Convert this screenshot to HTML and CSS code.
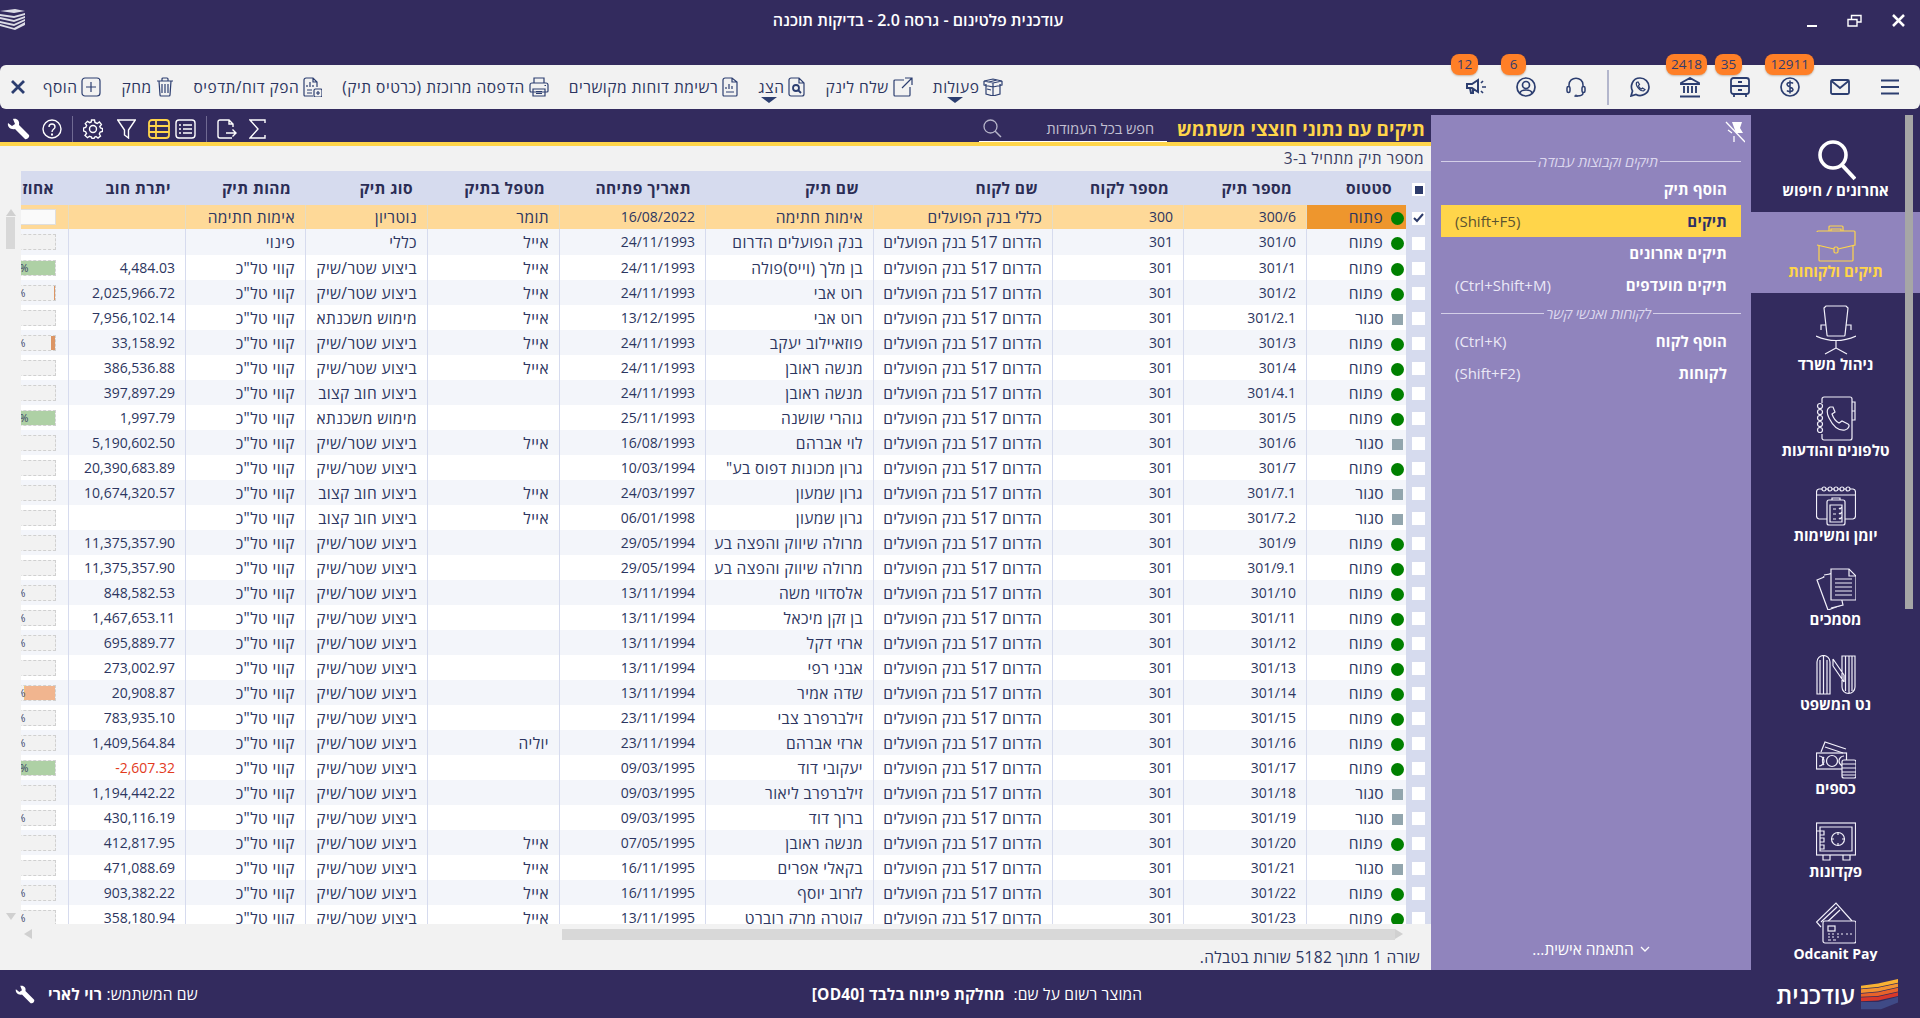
FILE: index.html
```html
<!DOCTYPE html>
<html lang="he" dir="rtl">
<head>
<meta charset="utf-8">
<title>עודכנית פלטינום</title>
<link rel="stylesheet" href="styles.css">
</head>
<body>
<div class="app">
  <header class="titlebar">
    <div class="winctl">
      <svg class="wc-close" width="13" height="13" viewBox="0 0 13 13"><path d="M1 1L12 12M12 1L1 12"/></svg>
      <svg class="wc-restore" width="15" height="13" viewBox="0 0 15 13"><path d="M1 5.500H10V12H1ZM4.500 5V1.500H14V8H10.500"/></svg>
      <svg class="wc-min" width="10" height="12" viewBox="0 0 10 12"><path d="M0 11H10"/></svg>
    </div>
    <div class="apptitle">עודכנית פלטינום - גרסה 2.0 - בדיקות תוכנה</div>
    <div class="applogo">
      <svg width="25" height="21" viewBox="0 0 25 21"><path d="M0 2L15 0L25 2L14 4ZM0 5L14 7L25 4V6L14 9L0 7ZM0 8L14 11L25 7V9L14 13L0 10ZM0 12L14 15L25 10V12L14 17L0 14ZM0 15L14 19L25 13V16L15 21L0 17Z" fill="#dcdce6"/></svg>
    </div>
  </header>

  <nav class="toolbar">
    <div class="tb-icons">
      <div class="tb-icon"><svg width="20" height="20" viewBox="0 0 20 20" class="ic"><path d="M1 3.500H19M1 10H19M1 16.500H19" stroke-width="2.200"/></svg></div>
      <div class="tb-icon"><svg width="20" height="16" viewBox="0 0 20 16" class="ic"><rect x="1" y="1" width="18" height="14" rx="1.500" stroke-width="1.800"/><path d="M1.500 2L10 9L18.500 2" stroke-width="1.800"/></svg></div>
      <div class="tb-icon"><span class="badge b5">12911</span><svg width="20" height="20" viewBox="0 0 20 20" class="ic"><circle cx="10" cy="10" r="9" stroke-width="1.700"/><path d="M13 6.500C12 5 7 5 7 7.500S13 10 13 12.500S8 15 7 13.500M10 3.500V16.500" stroke-width="1.500"/></svg></div>
      <div class="tb-icon"><span class="badge b4">35</span><svg width="20" height="20" viewBox="0 0 20 20" class="ic"><rect x="1" y="1" width="18" height="16" rx="2.500" stroke-width="1.800"/><path d="M1 9H19M8 5H12M8 13H12M4 17V20M16 17V20" stroke-width="1.800"/></svg></div>
      <div class="tb-icon"><span class="badge b3">2418</span><svg width="20" height="21" viewBox="0 0 20 21" class="ic"><path d="M1 6L10 1L19 6V7H1ZM4 9V16M8 9V16M12 9V16M16 9V16M0 19.500H20" stroke-width="1.900"/></svg></div>
      <div class="tb-icon"><svg width="20" height="20" viewBox="0 0 20 20" class="ic"><path d="M1 19L2.500 14C0 9.500 2 1 10 1C15 1 19 5 19 10C19 16.500 11.500 20.500 6 17.500Z" stroke-width="1.700"/><path d="M6.500 5.500C5.500 8 9 14 13.500 14L15 12.500L12.500 11L11.500 12C10 11.500 8.500 9.500 8.500 8.500L9.500 7.500L8 5Z" stroke-width="1.200"/></svg></div>
      <div class="tb-sep"></div>
      <div class="tb-icon"><svg width="20" height="20" viewBox="0 0 20 20" class="ic"><path d="M3 10V8C3 -1 17 -1 17 8V10M1 11C1 9 4 9 4 11V14C4 16 1 16 1 14ZM19 11C19 9 16 9 16 11V14C16 16 19 16 19 14ZM17 16C17 18 15 19 11 19" stroke-width="1.500"/><circle cx="10" cy="19" r="1" stroke-width="1.200"/></svg></div>
      <div class="tb-icon"><span class="badge b2">6</span><svg width="20" height="20" viewBox="0 0 20 20" class="ic"><circle cx="10" cy="10" r="9" stroke-width="1.700"/><circle cx="10" cy="8" r="3.500" stroke-width="1.700"/><path d="M4 16C5 12 15 12 16 16" stroke-width="1.700"/></svg></div>
      <div class="tb-icon"><span class="badge b1">12</span><svg width="20" height="18" viewBox="0 0 20 18" class="ic"><path d="M1 6H6L12 2V14L6 10H1ZM4 10L5 15H7L7 11" stroke-width="2"/><path d="M15 5L17 3M16 9H20M15 13L17 15" stroke-width="1.700"/></svg></div>
    </div>
    <div class="tb-actions">
      <button class="act has-caret"><svg width="20" height="18" viewBox="0 0 20 18" class="ic thin"><path d="M3 6V16L10 18L17 16V6M1 3L10 1L19 3L10 5ZM1 3V7L10 9L19 7V3M10 5V18M6 4L14 2M4 11L8 12"/></svg>פעולות</button>
      <button class="act"><svg width="20" height="20" viewBox="0 0 20 20" class="ic thin"><path d="M11 3H2A1 1 0 0 0 1 4V18A1 1 0 0 0 2 19H16A1 1 0 0 0 17 18V10M9 11L19 1M12 1H19V8"/></svg>שלח לינק</button>
      <button class="act has-caret"><svg width="17" height="20" viewBox="0 0 17 20" class="ic thin"><path d="M3 1H11L16 6V17A2 2 0 0 1 14 19H3A2 2 0 0 1 1 17V3A2 2 0 0 1 3 1ZM11 1V6H16"/><circle cx="8" cy="11" r="3" stroke-width="1.800"/><path d="M10 13L13 16" stroke-width="1.800"/></svg>הצג</button>
      <button class="act"><svg width="16" height="20" viewBox="0 0 16 20" class="ic thin"><path d="M3 1H10L15 5V18A1 1 0 0 1 14 19H2A1 1 0 0 1 1 18V3A2 2 0 0 1 3 1ZM10 1V5H15M4 15H12M4 12V10M7 12V7M10 12V9"/></svg>רשימת דוחות מקושרים</button>
      <button class="act"><svg width="20" height="20" viewBox="0 0 20 20" class="ic thin"><path d="M5 6V1H15V6M1 8A2 2 0 0 1 3 6H17A2 2 0 0 1 19 8V14A1 1 0 0 1 18 15H2A1 1 0 0 1 1 14ZM4 12H16V19H4ZM7 14.500H13M7 16.500H13M15.500 8.500H17"/></svg>הדפסה מרוכזת (כרטיס תיק)</button>
      <button class="act"><svg width="19" height="20" viewBox="0 0 19 20" class="ic thin"><path d="M3 1H10L14 5V10M10 1V5H14M10 19H2A1 1 0 0 1 1 18V3A2 2 0 0 1 3 1M4 10V8M7 10V5M10 10V8M4 13H9M4 16H9"/><rect x="11" y="12" width="8" height="8" rx="1.500"/><path d="M15 14V18M13 16H17"/></svg>הפק דוח/תדפיס</button>
      <button class="act"><svg width="18" height="20" viewBox="0 0 18 20" class="ic thin"><path d="M1 4H17M6 4V2A1 1 0 0 1 7 1H11A1 1 0 0 1 12 2V4M3 4L4 18A1 1 0 0 0 5 19H13A1 1 0 0 0 14 18L15 4M6 7V16M9 7V16M12 7V16"/></svg>מחק</button>
      <button class="act"><svg width="20" height="20" viewBox="0 0 20 20" class="ic thin"><rect x="1" y="1" width="18" height="18" rx="3"/><path d="M10 5V15M5 10H15"/></svg>הוסף</button>
      <svg class="ic act-x" width="14" height="14" viewBox="0 0 14 14"><path d="M1 1L13 13M13 1L1 13" stroke-width="2.800"/></svg>
    </div>
  </nav>

  <main class="main">
    <aside class="sidenav">
      <div class="navscroll"></div>
      <a class="navitem first">
        <svg width="40" height="42" viewBox="0 0 40 42" class="nv"><circle cx="17" cy="16" r="13" stroke-width="3.600"/><path d="M26 26L39 40" stroke-width="4"/></svg>
        <span>אחרונים / חיפוש</span>
      </a>
      <a class="navitem active">
        <svg width="40" height="37" viewBox="0 0 40 37" class="nv"><path d="M13 6V2A1 1 0 0 1 14 1H26A1 1 0 0 1 27 2V6M15 6V4H25V6M1 7A1 1 0 0 1 2 6H38A1 1 0 0 1 39 7V20L22 24M18 24L1 20ZM3 21V35A1 1 0 0 0 4 36H36A1 1 0 0 0 37 35V21"/><rect x="18" y="22" width="4" height="6" rx="1.500"/></svg>
        <span>תיקים ולקוחות</span>
      </a>
      <a class="navitem chair">
        <svg width="40" height="50" viewBox="0 0 40 50" class="nv"><path d="M10 1H30L32 3L29 30A1 1 0 0 1 28 31H12A1 1 0 0 1 11 30L8 3ZM10 20H5V25M30 20H35V25M0 31Q20 40 40 31M20 36V43M20 43L9 49M20 43L31 49"/></svg>
        <span>ניהול משרד</span>
      </a>
      <a class="navitem">
        <svg width="40" height="45" viewBox="0 0 40 45" class="nv"><path d="M6 7V3A2 2 0 0 1 8 1H34A2 2 0 0 1 36 3V42A2 2 0 0 1 34 44H8A2 2 0 0 1 6 42V38M36 6H39V15H36M39 15V24H36"/><circle cx="4" cy="10" r="2.500"/><circle cx="4" cy="16" r="2.500"/><circle cx="4" cy="22" r="2.500"/><circle cx="4" cy="28" r="2.500"/><circle cx="4" cy="34" r="2.500"/><path d="M14 11C10 13 11 18 13 22C17 30 23 35 29 34C33 33 34 29 32 28L26 25L23 27C19 25 17 21 16 18L19 16L17 11Z"/></svg>
        <span>טלפונים והודעות</span>
      </a>
      <a class="navitem">
        <svg width="40" height="41" viewBox="0 0 40 41" class="nv"><path d="M12 34H3A3 3 0 0 1 0.500 31V7A3 3 0 0 1 3 4H6M10 4H12M16 4H18M22 4H24M28 4H30M34 4H37A3 3 0 0 1 39.500 7V31A3 3 0 0 1 37 34H28M0.500 10H39.500"/><circle cx="8" cy="4" r="2"/><circle cx="14" cy="4" r="2"/><circle cx="20" cy="4" r="2"/><circle cx="26" cy="4" r="2"/><circle cx="32" cy="4" r="2"/><rect x="11" y="15" width="18" height="25" rx="2" class="fill-bg"/><path d="M16 15V13H24V15M14 20H26V37H14ZM17 24H20M17 29H20M17 34H20M23 23L24 24L26 22M23 28L24 29L26 27M23 33L24 34L26 32"/></svg>
        <span>יומן ומשימות</span>
      </a>
      <a class="navitem">
        <svg width="40" height="42" viewBox="0 0 40 42" class="nv"><path d="M1 12L13 7L23 38L12 42ZM7 9L19 4"/><path d="M8 7L20 5L27 37L15 40" class="fill-bg"/><path d="M15 1H33L40 8V32H15Z" class="fill-bg"/><path d="M33 1V8H40M19 11H36M19 15H36M19 19H36M19 23H36M19 27H36"/></svg>
        <span>מסמכים</span>
      </a>
      <a class="navitem">
        <svg width="40" height="40" viewBox="0 0 40 40" class="nv"><path d="M1 39V7A6.500 6.500 0 0 1 14 7V39ZM4 39V5M7.500 39V1M11 39V5M17 4L28 20M17 11L28 27M17 4V11M28 20V27M26 1V32A6.500 6.500 0 0 0 39 32V1ZM29.500 1V36M33 1V38M36 1V36"/></svg>
        <span>נט המשפט</span>
      </a>
      <a class="navitem">
        <svg width="40" height="38" viewBox="0 0 40 38" class="nv"><path d="M5 11L9 1L30 8M9 6L27 12"/><rect x="0.500" y="12" width="30" height="16"/><path d="M3 15A3 3 0 0 1 3 25M28 15A3 3 0 0 0 28 25"/><circle cx="16" cy="20" r="5.500"/><path d="M8 16A6 6 0 0 0 8 24"/><rect x="26" y="19" width="14" height="18" rx="2" class="fill-bg"/><path d="M26 23H40M26 27H40M26 31H40M26 34H40"/></svg>
        <span>כספים</span>
      </a>
      <a class="navitem">
        <svg width="40" height="40" viewBox="0 0 40 40" class="nv"><rect x="0.500" y="1" width="39" height="32"/><path d="M4 5H36V29H4ZM4 9H1M4 13H8V9H4M4 20H8V16H4M4 27H8V23H4M7 33V38H14V33M27 33V38H34V33"/><circle cx="22" cy="17" r="6.500"/><path d="M22 10V13M22 21V24M15 17H18M26 17H29"/></svg>
        <span>פקדונות</span>
      </a>
      <a class="navitem">
        <svg width="40" height="42" viewBox="0 0 40 42" class="nv"><path d="M5 25L0.500 20L20 1L36 19M5 20L21 5M8 23L24 8"/><rect x="7" y="19" width="33" height="22" rx="2" class="fill-bg"/><rect x="12" y="24" width="7" height="5"/><path d="M12 32H14M16 32H18M21 32H23M25 32H27M30 32H32M34 32H36M12 35H14M16 35H18M21 35H23M12 38H15M17 38H20"/></svg>
        <span lang="en">Odcanit Pay</span>
      </a>
    </aside>

    <section class="panel">
      <div class="panel-pin">
        <svg width="20" height="22" viewBox="0 0 20 22"><path d="M1 1L20 21" stroke="#fff" stroke-width="1.300"/><path d="M7 1H17L15 7L18 12H11Z" fill="#fff"/><path d="M9 15V21M3 9L7 12" stroke="#fff" stroke-width="1.300" fill="none"/></svg>
      </div>
      <div class="panel-head"><span>תיקים וקבוצות עבודה</span></div>
      <a class="pitem"><b>הוסף תיק</b></a>
      <a class="pitem sel"><b>תיקים</b><span dir="ltr">(Shift+F5)</span></a>
      <a class="pitem"><b>תיקים אחרונים</b></a>
      <a class="pitem"><b>תיקים מועדפים</b><span dir="ltr">(Ctrl+Shift+M)</span></a>
      <div class="panel-head second"><span>לקוחות ואנשי קשר</span></div>
      <a class="pitem"><b>הוסף לקוח</b><span dir="ltr">(Ctrl+K)</span></a>
      <a class="pitem"><b>לקוחות</b><span dir="ltr">(Shift+F2)</span></a>
      <div class="panel-foot">
        <svg width="10" height="6" viewBox="0 0 10 6"><path d="M1 1L5 5L9 1" fill="none" stroke="#fff" stroke-width="1.300"/></svg>
        <span>התאמה אישית...</span>
      </div>
    </section>

    <section class="content">
      <div class="hdr">
        <h1>תיקים עם נתוני חוצצי משתמש</h1>
        <div class="gsearch">
          <span>חפש בכל העמודות</span>
          <svg width="19" height="19" viewBox="0 0 19 19"><circle cx="7.500" cy="7.500" r="6.500" fill="none" stroke="#b5b3c8" stroke-width="1.300"/><path d="M12 12L18 18" stroke="#b5b3c8" stroke-width="1.500"/></svg>
        </div>
        <div class="hdr-tools">
          <svg width="23" height="22" viewBox="0 0 23 22"><path d="M1 5L5 8L8 6L6 1C10 0 13 3 12 7L22 17C23 19 20 22 18 21L8 11C4 12 0 9 1 5Z" fill="#fff"/></svg>
          <svg width="20" height="20" viewBox="0 0 20 20" class="wh"><circle cx="10" cy="10" r="9"/><path d="M7 8C7 4 13 4 13 8C13 10 10 10 10 13"/><path d="M10 14.500V16.500" stroke-width="2"/></svg>
          <i class="tool-sep"></i>
          <svg width="20" height="20" viewBox="0 0 20 20" class="wh"><circle cx="10" cy="10" r="3.500"/><path d="M8.500 1H11.500L12 3.500L14.200 4.500L16.400 3L18.400 5.500L16.800 7.500L17.500 9L19.500 9.500V12.500L17.200 13L16.300 15L17.500 17L15 19L13 17.500L11.500 18.200L11 19.500H9L8.500 18L6.500 17.300L4.500 18.700L2 16.500L3.500 14.500L2.600 12.700L0.500 12V9L2.700 8.500L3.600 6.500L2.300 4.500L4.500 2.300L6.700 3.600L8.200 3Z"/></svg>
          <svg width="19" height="20" viewBox="0 0 19 20" class="wh funnel"><path d="M0.700 1H18.300L11.500 11V19L7.500 16V11Z"/></svg>
          <svg width="22" height="20" viewBox="0 0 22 20" class="yl"><rect x="1" y="1" width="20" height="18" rx="3"/><path d="M1 7H21M1 13H21M8 1V19"/></svg>
          <svg width="21" height="20" viewBox="0 0 21 20" class="wh tight"><rect x="1" y="1" width="19" height="18" rx="3"/><path d="M8 6H17M8 10H17M8 14H17M4 6H6M4 10H6M4 14H6"/></svg>
          <i class="tool-sep"></i>
          <svg width="20" height="20" viewBox="0 0 20 20" class="wh"><path d="M16 8V5L12 1H3A2 2 0 0 0 1 3V17A2 2 0 0 0 3 19H15M12 1V5H16M9 14H19M15.500 10.500L19 14L15.500 17.500"/></svg>
          <svg width="17" height="20" viewBox="0 0 17 20" class="wh"><path d="M16 4V1H1L9 10L1 19H16V16"/></svg>
        </div>
      </div>
      <div class="filterline">מספר תיק מתחיל ב-3</div>
      <div class="gridarea">
        <div class="tablewrap">
          <table class="grid">
            <colgroup><col class="w-chk"><col class="w-st"><col class="w-file"><col class="w-cno"><col class="w-cli"><col class="w-name"><col class="w-date"><col class="w-hand"><col class="w-type"><col class="w-nat"><col class="w-bal"><col class="w-pct"></colgroup>
            <thead><tr><th class="c"><i class="cb part"></i></th><th>סטטוס</th><th>מספר תיק</th><th>מספר לקוח</th><th>שם לקוח</th><th>שם תיק</th><th>תאריך פתיחה</th><th>מטפל בתיק</th><th>סוג תיק</th><th>מהות תיק</th><th>יתרת חוב</th><th>אחוז</th></tr></thead>
            <tbody>
              <tr class="cur"><td class="c"><i class="cb on"><svg width="11" height="10" viewBox="0 0 11 10"><path d="M1 5L4 8L10 1" fill="none" stroke="#2c3a6a" stroke-width="2"/></svg></i></td><td class="st"><i class="dot"></i>פתוח</td><td>300/6</td><td>300</td><td>כללי בנק הפועלים</td><td>אימות חתימה</td><td>16/08/2022</td><td>תומר</td><td>נוטריון</td><td>אימות חתימה</td><td></td><td><div class="bar blank"></div></td></tr>
              <tr class="second"><td class="c"><i class="cb"></i></td><td class="st"><i class="dot"></i>פתוח</td><td>301/0</td><td>301</td><td>הדרום 517 בנק הפועלים</td><td>בנק הפועלים הדרום</td><td>24/11/1993</td><td>אייל</td><td>כללי</td><td>פינוי</td><td></td><td><div class="bar"></div></td></tr>
              <tr><td class="c"><i class="cb"></i></td><td class="st"><i class="dot"></i>פתוח</td><td>301/1</td><td>301</td><td>הדרום 517 בנק הפועלים</td><td>בן מלך (וייס)פולה</td><td>24/11/1993</td><td>אייל</td><td>ביצוע שטר/שיק</td><td>קווי טל"כ</td><td>4,484.03</td><td><div class="bar"><b class="full" style="width:100%"></b><span>100%</span></div></td></tr>
              <tr><td class="c"><i class="cb"></i></td><td class="st"><i class="dot"></i>פתוח</td><td>301/2</td><td>301</td><td>הדרום 517 בנק הפועלים</td><td>רוט אבי</td><td>24/11/1993</td><td>אייל</td><td>ביצוע שטר/שיק</td><td>קווי טל"כ</td><td>2,025,966.72</td><td><div class="bar"><b style="width:2px"></b><span>15%</span></div></td></tr>
              <tr><td class="c"><i class="cb"></i></td><td class="st"><i class="sq"></i>סגור</td><td>301/2.1</td><td>301</td><td>הדרום 517 בנק הפועלים</td><td>רוט אבי</td><td>13/12/1995</td><td>אייל</td><td>מימוש משכנתא</td><td>קווי טל"כ</td><td>7,956,102.14</td><td><div class="bar"></div></td></tr>
              <tr><td class="c"><i class="cb"></i></td><td class="st"><i class="dot"></i>פתוח</td><td>301/3</td><td>301</td><td>הדרום 517 בנק הפועלים</td><td>פוזאיילוב יעקב</td><td>24/11/1993</td><td>אייל</td><td>ביצוע שטר/שיק</td><td>קווי טל"כ</td><td>33,158.92</td><td><div class="bar"><b style="width:5px"></b><span>15%</span></div></td></tr>
              <tr><td class="c"><i class="cb"></i></td><td class="st"><i class="dot"></i>פתוח</td><td>301/4</td><td>301</td><td>הדרום 517 בנק הפועלים</td><td>מנשה ראובן</td><td>24/11/1993</td><td>אייל</td><td>ביצוע שטר/שיק</td><td>קווי טל"כ</td><td>386,536.88</td><td><div class="bar"></div></td></tr>
              <tr><td class="c"><i class="cb"></i></td><td class="st"><i class="dot"></i>פתוח</td><td>301/4.1</td><td>301</td><td>הדרום 517 בנק הפועלים</td><td>מנשה ראובן</td><td>24/11/1993</td><td></td><td>ביצוע חוב קצוב</td><td>קווי טל"כ</td><td>397,897.29</td><td><div class="bar"></div></td></tr>
              <tr><td class="c"><i class="cb"></i></td><td class="st"><i class="dot"></i>פתוח</td><td>301/5</td><td>301</td><td>הדרום 517 בנק הפועלים</td><td>גוהרי שושנה</td><td>25/11/1993</td><td></td><td>מימוש משכנתא</td><td>קווי טל"כ</td><td>1,997.79</td><td><div class="bar"><b class="full" style="width:100%"></b><span>100%</span></div></td></tr>
              <tr><td class="c"><i class="cb"></i></td><td class="st"><i class="sq"></i>סגור</td><td>301/6</td><td>301</td><td>הדרום 517 בנק הפועלים</td><td>לוי אברהם</td><td>16/08/1993</td><td>אייל</td><td>ביצוע שטר/שיק</td><td>קווי טל"כ</td><td>5,190,602.50</td><td><div class="bar"></div></td></tr>
              <tr><td class="c"><i class="cb"></i></td><td class="st"><i class="dot"></i>פתוח</td><td>301/7</td><td>301</td><td>הדרום 517 בנק הפועלים</td><td>גרון מכונות דפוס בע"</td><td>10/03/1994</td><td></td><td>ביצוע שטר/שיק</td><td>קווי טל"כ</td><td>20,390,683.89</td><td><div class="bar"></div></td></tr>
              <tr><td class="c"><i class="cb"></i></td><td class="st"><i class="sq"></i>סגור</td><td>301/7.1</td><td>301</td><td>הדרום 517 בנק הפועלים</td><td>גרון שמעון</td><td>24/03/1997</td><td>אייל</td><td>ביצוע חוב קצוב</td><td>קווי טל"כ</td><td>10,674,320.57</td><td><div class="bar"></div></td></tr>
              <tr><td class="c"><i class="cb"></i></td><td class="st"><i class="sq"></i>סגור</td><td>301/7.2</td><td>301</td><td>הדרום 517 בנק הפועלים</td><td>גרון שמעון</td><td>06/01/1998</td><td>אייל</td><td>ביצוע חוב קצוב</td><td>קווי טל"כ</td><td></td><td><div class="bar"></div></td></tr>
              <tr><td class="c"><i class="cb"></i></td><td class="st"><i class="dot"></i>פתוח</td><td>301/9</td><td>301</td><td>הדרום 517 בנק הפועלים</td><td>מרולה שיווק והפצה בע</td><td>29/05/1994</td><td></td><td>ביצוע שטר/שיק</td><td>קווי טל"כ</td><td>11,375,357.90</td><td><div class="bar"></div></td></tr>
              <tr><td class="c"><i class="cb"></i></td><td class="st"><i class="dot"></i>פתוח</td><td>301/9.1</td><td>301</td><td>הדרום 517 בנק הפועלים</td><td>מרולה שיווק והפצה בע</td><td>29/05/1994</td><td></td><td>ביצוע שטר/שיק</td><td>קווי טל"כ</td><td>11,375,357.90</td><td><div class="bar"></div></td></tr>
              <tr><td class="c"><i class="cb"></i></td><td class="st"><i class="dot"></i>פתוח</td><td>301/10</td><td>301</td><td>הדרום 517 בנק הפועלים</td><td>אלסדווי משה</td><td>13/11/1994</td><td></td><td>ביצוע שטר/שיק</td><td>קווי טל"כ</td><td>848,582.53</td><td><div class="bar"><span>15%</span></div></td></tr>
              <tr><td class="c"><i class="cb"></i></td><td class="st"><i class="dot"></i>פתוח</td><td>301/11</td><td>301</td><td>הדרום 517 בנק הפועלים</td><td>בן זקן מיכאל</td><td>13/11/1994</td><td></td><td>ביצוע שטר/שיק</td><td>קווי טל"כ</td><td>1,467,653.11</td><td><div class="bar"><b style="width:1px"></b><span>15%</span></div></td></tr>
              <tr><td class="c"><i class="cb"></i></td><td class="st"><i class="dot"></i>פתוח</td><td>301/12</td><td>301</td><td>הדרום 517 בנק הפועלים</td><td>ארזי דקל</td><td>13/11/1994</td><td></td><td>ביצוע שטר/שיק</td><td>קווי טל"כ</td><td>695,889.77</td><td><div class="bar"><span>15%</span></div></td></tr>
              <tr><td class="c"><i class="cb"></i></td><td class="st"><i class="dot"></i>פתוח</td><td>301/13</td><td>301</td><td>הדרום 517 בנק הפועלים</td><td>אבני רפי</td><td>13/11/1994</td><td></td><td>ביצוע שטר/שיק</td><td>קווי טל"כ</td><td>273,002.97</td><td><div class="bar"></div></td></tr>
              <tr><td class="c"><i class="cb"></i></td><td class="st"><i class="dot"></i>פתוח</td><td>301/14</td><td>301</td><td>הדרום 517 בנק הפועלים</td><td>שדה אמיר</td><td>13/11/1994</td><td></td><td>ביצוע שטר/שיק</td><td>קווי טל"כ</td><td>20,908.87</td><td><div class="bar"><b class="salmon" style="width:32px"></b><span>15%</span></div></td></tr>
              <tr><td class="c"><i class="cb"></i></td><td class="st"><i class="dot"></i>פתוח</td><td>301/15</td><td>301</td><td>הדרום 517 בנק הפועלים</td><td>זילברפרב צבי</td><td>23/11/1994</td><td></td><td>ביצוע שטר/שיק</td><td>קווי טל"כ</td><td>783,935.10</td><td><div class="bar"><span>15%</span></div></td></tr>
              <tr><td class="c"><i class="cb"></i></td><td class="st"><i class="dot"></i>פתוח</td><td>301/16</td><td>301</td><td>הדרום 517 בנק הפועלים</td><td>ארזי אברהם</td><td>23/11/1994</td><td>יוליה</td><td>ביצוע שטר/שיק</td><td>קווי טל"כ</td><td>1,409,564.84</td><td><div class="bar"><span>15%</span></div></td></tr>
              <tr><td class="c"><i class="cb"></i></td><td class="st"><i class="dot"></i>פתוח</td><td>301/17</td><td>301</td><td>הדרום 517 בנק הפועלים</td><td>יעקובי דוד</td><td>09/03/1995</td><td></td><td>ביצוע שטר/שיק</td><td>קווי טל"כ</td><td class="neg">-2,607.32</td><td><div class="bar"><b class="full" style="width:100%"></b><span>100%</span></div></td></tr>
              <tr><td class="c"><i class="cb"></i></td><td class="st"><i class="sq"></i>סגור</td><td>301/18</td><td>301</td><td>הדרום 517 בנק הפועלים</td><td>זילברפרב ליאור</td><td>09/03/1995</td><td></td><td>ביצוע שטר/שיק</td><td>קווי טל"כ</td><td>1,194,442.22</td><td><div class="bar"></div></td></tr>
              <tr><td class="c"><i class="cb"></i></td><td class="st"><i class="sq"></i>סגור</td><td>301/19</td><td>301</td><td>הדרום 517 בנק הפועלים</td><td>ברוך דוד</td><td>09/03/1995</td><td></td><td>ביצוע שטר/שיק</td><td>קווי טל"כ</td><td>430,116.19</td><td><div class="bar"><span>15%</span></div></td></tr>
              <tr><td class="c"><i class="cb"></i></td><td class="st"><i class="dot"></i>פתוח</td><td>301/20</td><td>301</td><td>הדרום 517 בנק הפועלים</td><td>מנשה ראובן</td><td>07/05/1995</td><td>אייל</td><td>ביצוע שטר/שיק</td><td>קווי טל"כ</td><td>412,817.95</td><td><div class="bar"></div></td></tr>
              <tr><td class="c"><i class="cb"></i></td><td class="st"><i class="sq"></i>סגור</td><td>301/21</td><td>301</td><td>הדרום 517 בנק הפועלים</td><td>בקאלי אפרים</td><td>16/11/1995</td><td>אייל</td><td>ביצוע שטר/שיק</td><td>קווי טל"כ</td><td>471,088.69</td><td><div class="bar"></div></td></tr>
              <tr><td class="c"><i class="cb"></i></td><td class="st"><i class="dot"></i>פתוח</td><td>301/22</td><td>301</td><td>הדרום 517 בנק הפועלים</td><td>לזרוב יוסף</td><td>16/11/1995</td><td>אייל</td><td>ביצוע שטר/שיק</td><td>קווי טל"כ</td><td>903,382.22</td><td><div class="bar"><b style="width:1px"></b><span>15%</span></div></td></tr>
              <tr><td class="c"><i class="cb"></i></td><td class="st"><i class="dot"></i>פתוח</td><td>301/23</td><td>301</td><td>הדרום 517 בנק הפועלים</td><td>קוטרה מרק רוברט</td><td>13/11/1995</td><td>אייל</td><td>ביצוע שטר/שיק</td><td>קווי טל"כ</td><td>358,180.94</td><td><div class="bar"><span>15%</span></div></td></tr>
            </tbody>
          </table>
        </div>
        <div class="vbar">
          <div class="vbar-top"><i class="ar-up"></i><i class="vthumb"></i></div>
          <i class="ar-down"></i>
        </div>
      </div>
      <div class="hbar"><i class="ar-right"></i><i class="hthumb"></i><i class="ar-left"></i></div>
      <div class="statusline">שורה 1 מתוך 5182 שורות בטבלה.</div>
    </section>
  </main>

  <footer class="footer">
    <div class="ft-logo">
      <svg width="37" height="31" viewBox="0 0 37 42" preserveAspectRatio="none"><path d="M0 9L17 6L37 0V5L17 11L0 13Z" fill="#f9b233"/><path d="M0 14L17 12L37 6V11L17 17L0 19Z" fill="#f39231"/><path d="M0 20L17 18L37 12V17L17 23L0 24Z" fill="#e8632a"/><path d="M0 25L17 24L37 18V23L17 29L0 30Z" fill="#d8382a"/><path d="M0 31H17L37 24V32L20 41H0Z" fill="#3f4a86"/></svg>
      <span>עודכנית</span>
    </div>
    <div class="ft-center">המוצר רשום על שם: &nbsp;<b>מחלקת פיתוח בלבד [OD40]</b></div>
    <div class="ft-user">
      <span>שם המשתמש: <b>רוי לארי</b></span>
      <svg width="20" height="21" viewBox="0 0 23 22"><path d="M1 5L5 8L8 6L6 1C10 0 13 3 12 7L22 17C23 19 20 22 18 21L8 11C4 12 0 9 1 5Z" fill="#fff"/></svg>
    </div>
  </footer>
</div>
</body>
</html>
```

FILE: styles.css
```css
* { box-sizing: border-box; }
html, body { margin: 0; padding: 0; height: 100%; overflow: hidden; }
body { font-family: "Open Sans", "Liberation Sans", sans-serif; font-size: 14px; color: #2c3560; background: #332b5e; }
.app { width: 1920px; height: 1018px; display: flex; flex-direction: column; background: #332b5e; overflow: hidden; }

.titlebar { height: 65px; flex: none; display: grid; grid-template-columns: 1fr auto 1fr; align-items: start; color: #fff; }
.winctl { display: flex; align-items: center; gap: 30px; padding: 14px 15px 0 0; }
.winctl svg { fill: none; stroke: #fff; }
.wc-close path { stroke-width: 2.500; }
.wc-restore path { stroke-width: 1.400; }
.wc-min path { stroke-width: 2; }
.apptitle { font-size: 16px; font-weight: 600; padding-top: 9px; margin-right: 84px; }
.applogo { padding: 9px 11px 0 0; direction: ltr; }

.toolbar { height: 44px; flex: none; background: #f2f2f2; border-radius: 6px; display: flex; justify-content: space-between; align-items: center; }
.tb-icons { display: flex; align-items: center; height: 100%; padding-right: 5px; }
.tb-icon { width: 50px; height: 44px; display: flex; align-items: center; justify-content: center; position: relative; }
.tb-sep { width: 2px; height: 35px; margin: 0 6px; background: #b3b6cc; }
.ic { fill: none; stroke: #2c3e70; flex: none; }
.ic.thin { stroke-width: 1.200; }
.badge { position: absolute; top: -11px; height: 21px; line-height: 21px; padding: 0 5px; min-width: 25px; text-align: center; background: #ff7f27; color: #333c6e; border-radius: 8px; font-size: 13.500px; box-shadow: 0 1px 2px rgba(120,70,20,.35); }
.b1 { right: 23px; min-width: 27px; }
.b2 { right: 25px; }
.b3 { right: 8px; }
.b4 { right: 23px; min-width: 27px; }
.b5 { right: 1px; }
.tb-actions { display: flex; align-items: center; gap: 20px; padding-left: 11px; height: 100%; }
.act { display: flex; align-items: center; gap: 4px; height: 44px; padding: 0; border: 0; background: none; font: inherit; font-size: 15.500px; letter-spacing: .5px; color: #2c3560; position: relative; white-space: nowrap; }
.has-caret::after { content: ""; position: absolute; bottom: 6px; left: 50%; margin-left: -21px; border: 8px solid transparent; border-top: 6px solid #2c3e70; border-bottom: 0; }
.act-x { margin-right: -2px; }

.main { height: 861px; flex: none; display: flex; }
.sidenav { width: 169px; flex: none; margin-top: 6px; height: 846px; overflow: hidden; position: relative; display: flex; flex-direction: column; }
.navscroll { position: absolute; top: 0; right: 7px; width: 8px; height: 494px; background: #a6a6a6; z-index: 2; }
.navitem { height: 84.500px; flex: none; display: flex; flex-direction: column; align-items: center; justify-content: flex-end; color: #fff; font-weight: 700; font-size: 15px; line-height: 19px; padding-bottom: 4px; }
.navitem.chair { height: 86.500px; padding-bottom: 6px; }
.navitem:nth-last-child(-n+2) { height: 82.500px; }
.navitem span[lang="en"] { font-size: 14px; }
.navitem.first { height: 97px; padding-bottom: 12px; }
.navitem.active { height: 81px; background: #9084bd; color: #ffd54a; padding-bottom: 12px; }
.nv { fill: none; stroke: #f2f0fa; stroke-width: 1.200; flex: none; }
.navitem.first .nv { stroke: #fff; }
.navitem.active .nv { stroke: #ffd54a; }
.nv .fill-bg { fill: #332b5e; }

.panel { width: 320px; flex: none; margin-top: 6px; background: #9084bd; display: flex; flex-direction: column; padding: 6px 10px 0; position: relative; }
.panel-pin { height: 22px; display: flex; margin-right: -4px; }
.panel-head { height: 24px; margin-top: 6px; display: flex; align-items: center; gap: 2px; font-style: italic; font-size: 14.500px; color: #dcd7ee; }
.panel-head::before, .panel-head::after { content: ""; height: 1px; background: #d4cfe8; }
.panel-head::before { width: 81px; }
.panel-head::after { flex: 1; }
.panel-head.second { margin-top: 0; }
.panel-head.second::before { width: 88px; }
.pitem { height: 32px; flex: none; display: flex; align-items: center; justify-content: space-between; padding: 0 14px; color: #fff; font-size: 15px; }
.pitem b { font-weight: 700; letter-spacing: .2px; }
.pitem span { color: #ebe8f6; font-size: 15px; }
.pitem.sel { background: #ffd54a; color: #2c2f66; }
.pitem.sel span { color: #5b5330; }
.panel-foot { margin-top: auto; height: 36px; display: flex; justify-content: center; align-items: center; gap: 6px; color: #fff; font-size: 15.500px; padding-bottom: 6px; }

.content { width: 1431px; flex: none; display: flex; flex-direction: column; background: #f2f2f2; }
.hdr { height: 37px; flex: none; background: #332b5e; border-bottom: 4px solid #ffd54a; display: flex; align-items: center; padding: 6px 6px 0 0; }
.hdr h1 { margin: 0; font-size: 18.800px; font-weight: 700; color: #ffd54a; white-space: nowrap; }
.gsearch { margin-right: 10px; width: 188px; height: 26px; border-bottom: 1px solid #fff; display: flex; justify-content: space-between; align-items: center; padding: 0 13px 0 4px; color: #c2c0d2; font-size: 14.500px; }
.hdr-tools { margin-right: auto; direction: ltr; display: flex; align-items: center; gap: 12px; padding-left: 7px; height: 30px; }
.hdr-tools .wh { fill: none; stroke: #fff; stroke-width: 1.400; }
.hdr-tools .yl { fill: none; stroke: #ffd54a; stroke-width: 1.800; }
.tool-sep { width: 1px; height: 26px; background: #706a93; margin: 0 -2px; }
.funnel { margin-left: 2px; }
.tight { margin-left: -7px; }
.filterline { height: 25px; flex: none; padding-right: 7px; line-height: 25px; font-size: 15.500px; letter-spacing: .4px; color: #3a3d63; }

.gridarea { height: 753px; flex: none; display: flex; }
.tablewrap { width: 1410px; height: 753px; overflow: hidden; flex: none; }
.grid { table-layout: fixed; width: 1463px; border-collapse: separate; border-spacing: 0; }
.w-chk { width: 25px; } .w-st { width: 100px; } .w-file { width: 123px; } .w-cno { width: 131px; }
.w-cli { width: 179px; } .w-name { width: 168px; } .w-date { width: 146px; } .w-hand { width: 132px; }
.w-type { width: 122px; } .w-nat { width: 120px; } .w-bal { width: 117px; } .w-pct { width: 100px; }
.grid th { height: 34px; background: #d6dbee; font-weight: 700; font-size: 15.500px; letter-spacing: .4px; text-align: right; padding: 0 14px 0 0; color: #2b2d55; white-space: nowrap; overflow: hidden; }
.grid td { height: 25px; line-height: 20px; padding: 0 10px 0 0; white-space: nowrap; overflow: hidden; font-size: 14px; color: #2c3560; border-left: 1px solid #d6dbee; background: #fff; }
.grid td:nth-child(2), .grid td:nth-child(6), .grid td:nth-child(8), .grid td:nth-child(9), .grid td:nth-child(10) { font-size: 15.500px; letter-spacing: .4px; }
.grid td:nth-child(5) { font-size: 15.500px; letter-spacing: .2px; }
.grid tbody tr:nth-child(even) td { background: #f3f5fa; }
.grid tbody tr.cur td { height: 24px; background: #fed998; border-left-color: #e6dcc2; }
.grid tbody tr.second td { height: 26px; }
.grid .c, .grid tbody tr td.c, .grid tbody tr:nth-child(even) td.c { background: #d6dbee; padding: 0; text-align: center; border: 0; }
.grid tbody tr.cur td.st { background: #ee962d; }
.grid td.st { padding-right: 2px; }
.grid td.neg { color: #e23a1e; direction: ltr; text-align: right; }
.cb { display: inline-flex; width: 13px; height: 13px; background: #fff; vertical-align: middle; align-items: center; justify-content: center; }
.cb.part::after { content: ""; width: 8px; height: 8px; background: #2c3a6a; }
.dot { display: inline-block; width: 13px; height: 13px; border-radius: 50%; background: #008000; margin-left: 8px; vertical-align: -2px; }
.sq { display: inline-block; width: 11px; height: 11px; background: #92a5ad; margin: 0 1px 0 8px; vertical-align: -1px; }
.grid td:last-child { padding: 0 12px 0 0; border-left: 0; }
.bar { width: 82px; height: 16px; background: #f2f2f2; border: 1px dashed #d0d0d0; position: relative; overflow: hidden; font-size: 10.500px; line-height: 14px; letter-spacing: 0; text-align: center; color: #3a3d63; }
.bar.blank { background: #fafafa; border: 1px solid #dedede; }
.bar b { position: absolute; top: -1px; bottom: -1px; right: -1px; background: #dc9565; }
.bar b.full { background: #aed0a5; }
.bar b.salmon { background: #f1b58f; outline: 1px dotted #f4d36c; outline-offset: -1px; }
.bar span { position: relative; }

.vbar { width: 21px; flex: none; height: 753px; display: flex; flex-direction: column; justify-content: space-between; align-items: center; padding: 38px 0 4px; }
.vbar-top { display: flex; flex-direction: column; align-items: center; }
.ar-up { border: 5.500px solid transparent; border-bottom: 7px solid #d0d0d0; border-top: 0; }
.vthumb { width: 9px; height: 32px; margin-top: 1px; background: #d8d8d8; }
.ar-down { border: 5.500px solid transparent; border-top: 7px solid #d0d0d0; border-bottom: 0; }
.hbar { height: 26px; flex: none; padding: 5px 28px 0 0; display: flex; align-items: flex-start; }
.ar-right { border: 5.500px solid transparent; border-left: 8px solid #d0d0d0; border-right: 0; }
.hthumb { width: 833px; height: 11px; background: #d8d8d8; }
.ar-left { margin-right: auto; margin-left: 24px; border: 5.500px solid transparent; border-right: 8px solid #d0d0d0; border-left: 0; }
.statusline { height: 20px; flex: none; padding-right: 11px; line-height: 14px; font-size: 15.500px; letter-spacing: .3px; color: #2c3560; }

.footer { height: 48px; flex: none; display: grid; grid-template-columns: 1fr auto 1fr; align-items: center; color: #fff; font-size: 15.500px; letter-spacing: .2px; }
.ft-logo { display: flex; align-items: center; gap: 6px; padding-right: 22px; font-size: 24px; font-weight: 600; letter-spacing: 0; }
.ft-center { justify-self: center; margin-left: 34px; }
.ft-user { justify-self: end; display: flex; align-items: center; gap: 13px; padding-left: 15px; }
```
